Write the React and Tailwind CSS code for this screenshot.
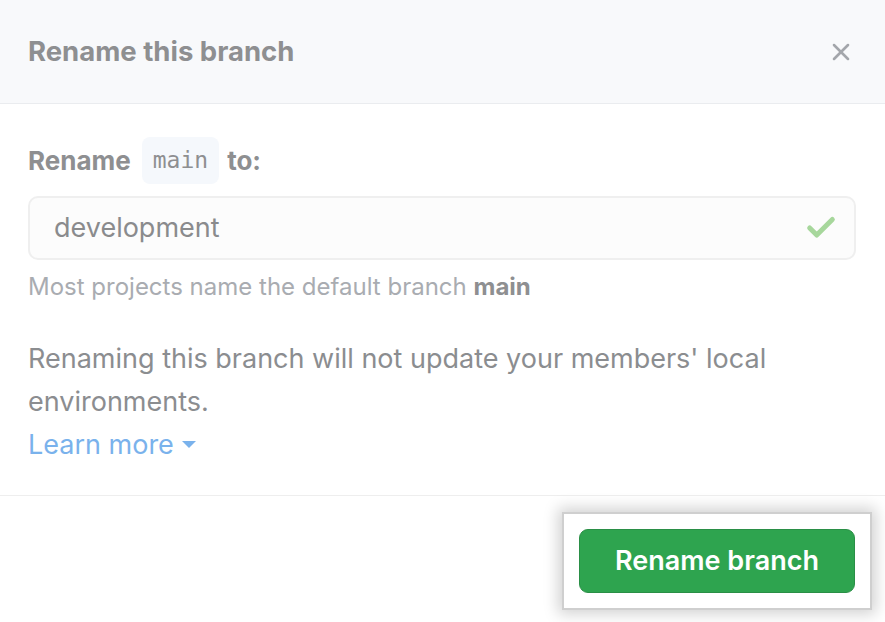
import { X, Check } from "lucide-react";

const App = () => {
  return (
    <div className="w-[885px] h-[622px] bg-white overflow-hidden relative font-['Inter','Liberation_Sans',Arial,sans-serif]">
      {/* Header */}
      <div className="h-[104px] bg-[#f8f9fb] border-b border-[#eaecef] flex items-center justify-between pl-[28px] pr-[30px]">
        <h2 className="text-[27.5px] leading-[34px] font-bold text-[#8e8f91] pb-[2px]">Rename this branch</h2>
        <X className="w-[28px] h-[28px] text-[#a3a6ab]" strokeWidth={2.2} />
      </div>

      {/* Body */}
      <div className="px-[28px] pt-[33px] pb-[29px] border-b border-[#eeeeee]">
        <div className="flex items-center gap-[8px] text-[26px] leading-[34px] font-bold text-[#8e8f91]">
          <span>Rename</span>
          <code className="ml-[3px] px-[11px] py-[8px] rounded-[8px] bg-[#f5f8fc] font-['DejaVu_Sans_Mono',monospace] font-normal text-[23px] text-[#8e8f91] leading-[31px]">
            main
          </code>
          <span>to:</span>
        </div>

        <div className="mt-[12px] h-[64px] w-[828px] rounded-[10px] border-2 border-[#efefef] bg-[#fcfcfc] flex items-center justify-between pl-[24px] pr-[16px]">
          <span className="text-[27px] text-[#8a8b8d]">development</span>
          <Check className="w-[34px] h-[34px] text-[#a7d79c]" strokeWidth={3.5} />
        </div>

        <p className="mt-[12px] text-[24px] leading-[30px] text-[#a9acb1]">
          Most projects name the default branch <b className="text-[#8e8f91]">main</b>
        </p>

        <p className="mt-[35px] text-[27px] leading-[43px] text-[#8b8d90]">
          Renaming this branch will not update your members' local environments.
        </p>
        <a className="flex items-center gap-[8px] text-[27px] leading-[43px] text-[#7ab2ec]">
          Learn more
          <span className="w-0 h-0 border-l-[7px] border-r-[7px] border-t-[7px] border-l-transparent border-r-transparent border-t-[#7ab2ec]" />
        </a>
      </div>

      {/* Footer */}
      <div className="flex justify-end pr-[13px] pt-[16px]">
        <div className="bg-white border-2 border-[#cfcfcf] shadow-[0_0_14px_4px_rgba(0,0,0,0.18)] px-[15px] py-[15px]">
          <button className="w-[276px] h-[64px] rounded-[9px] bg-[#2ea44f] border border-[#2a8f46] text-white text-[27px] font-semibold">
            Rename branch
          </button>
        </div>
      </div>
    </div>
  );
};

export default App;
